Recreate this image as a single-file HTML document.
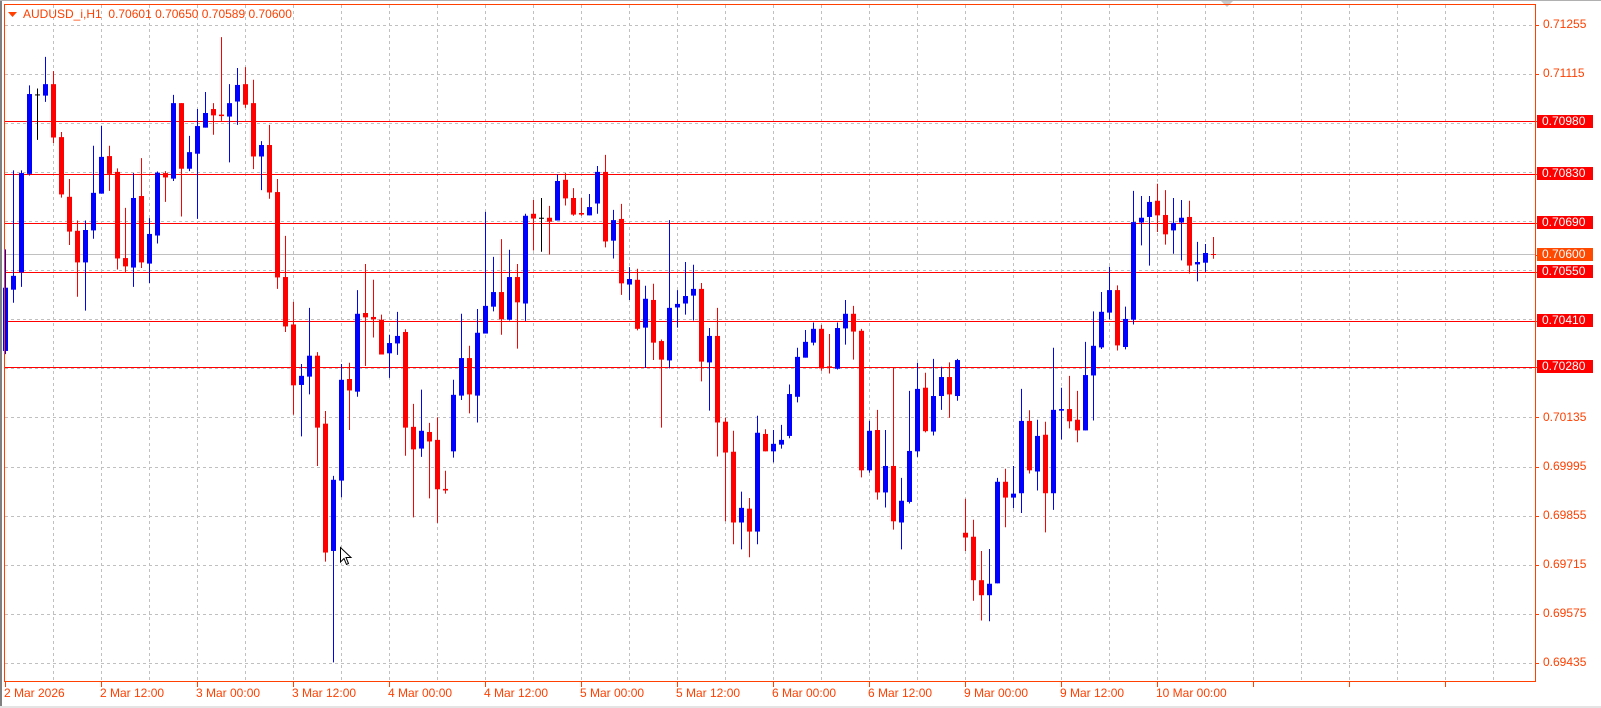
<!DOCTYPE html>
<html><head><meta charset="utf-8">
<style>
html,body{margin:0;padding:0;background:#fff;width:1601px;height:708px;overflow:hidden;font-family:"Liberation Sans",sans-serif;}
#wrap{position:relative;width:1601px;height:708px;}
svg{position:absolute;left:0;top:0;}
.t{position:absolute;font-size:12px;color:#ff4000;white-space:nowrap;line-height:13px;}
.bx{position:absolute;left:1537px;width:56px;height:13px;font-size:12px;line-height:13px;color:#fff;padding-left:5px;box-sizing:border-box;}
</style></head><body><div id="wrap">
<svg id="s" width="1601" height="708" xmlns="http://www.w3.org/2000/svg"></svg>
<div class="t" style="left:23px;top:8px;">AUDUSD_i,H1&nbsp; 0.70601 0.70650 0.70589 0.70600</div>
<div class="t" style="left:1543px;top:18px;">0.71255</div>
<div class="t" style="left:1543px;top:67px;">0.71115</div>
<div class="bx" style="top:115px;background:#ff0000;">0.70980</div>
<div class="bx" style="top:167px;background:#ff0000;">0.70830</div>
<div class="bx" style="top:216px;background:#ff0000;">0.70690</div>
<div class="bx" style="top:248px;background:#ff4800;">0.70600</div>
<div class="bx" style="top:265px;background:#ff0000;">0.70550</div>
<div class="bx" style="top:314px;background:#ff0000;">0.70410</div>
<div class="bx" style="top:360px;background:#ff0000;">0.70280</div>
<div class="t" style="left:1543px;top:411px;">0.70135</div>
<div class="t" style="left:1543px;top:460px;">0.69995</div>
<div class="t" style="left:1543px;top:509px;">0.69855</div>
<div class="t" style="left:1543px;top:558px;">0.69715</div>
<div class="t" style="left:1543px;top:607px;">0.69575</div>
<div class="t" style="left:1543px;top:656px;">0.69435</div>
<div class="t" style="left:4px;top:687px;">2 Mar 2026</div>
<div class="t" style="left:100px;top:687px;">2 Mar 12:00</div>
<div class="t" style="left:196px;top:687px;">3 Mar 00:00</div>
<div class="t" style="left:292px;top:687px;">3 Mar 12:00</div>
<div class="t" style="left:388px;top:687px;">4 Mar 00:00</div>
<div class="t" style="left:484px;top:687px;">4 Mar 12:00</div>
<div class="t" style="left:580px;top:687px;">5 Mar 00:00</div>
<div class="t" style="left:676px;top:687px;">5 Mar 12:00</div>
<div class="t" style="left:772px;top:687px;">6 Mar 00:00</div>
<div class="t" style="left:868px;top:687px;">6 Mar 12:00</div>
<div class="t" style="left:964px;top:687px;">9 Mar 00:00</div>
<div class="t" style="left:1060px;top:687px;">9 Mar 12:00</div>
<div class="t" style="left:1156px;top:687px;">10 Mar 00:00</div>
</div>
<script>
var s=document.getElementById('s'),NS='http://www.w3.org/2000/svg',h='';
function ln(x1,y1,x2,y2,c,w,d){h+='<line x1="'+x1+'" y1="'+y1+'" x2="'+x2+'" y2="'+y2+'" stroke="'+c+'" stroke-width="'+(w||1)+'"'+(d?' stroke-dasharray="'+d+'"':'')+'/>';}
function rc(x,y,w,hh,c){h+='<rect x="'+x+'" y="'+y+'" width="'+w+'" height="'+hh+'" fill="'+c+'"/>';}
// outer
rc(0,0,2,708,'#808080');rc(0,0,1601,1,'#b0b0b0');rc(0,706,1601,2,'#e4e4e4');
h+='<polygon points="1221,1 1233,1 1227,7" fill="#c8c8c8"/>';
// grid
for(var k=0;k<14;k++){var y=Math.round(24.9+49.07*k)+0.5;ln(5,y,1535,y,'#c0c0c0',1,'3,3');}
for(var x=53.5;x<1535;x+=48){ln(x,5,x,681,'#c0c0c0',1,'3,3');}
// axis ticks
[24.9,74,417.4,466.5,515.6,564.7,613.7,662.8,121.3,173.9,223,254.5,272,321,366.6].forEach(function(y){y=Math.round(y)+0.5;ln(1535,y,1539,y,'#ff4000');});
for(var x=5.5;x<1535;x+=96){ln(x,682,x,687,'#ff4000');}
// level lines
[121.3,173.9,223,272,321,366.6].forEach(function(y){y=Math.round(y)+0.5;ln(5,y,1535,y,'#ff0000',1);});
ln(5,254.5,1535,254.5,'#c0c0c0',1);
var C={b:'#0000ff',r:'#ff0000',k:'#000000'};
function cand(xc,c,hi,t,b,lo){var xi=Math.round(xc);ln(xi+0.5,hi,xi+0.5,lo,C[c]);if(c=='k'){ln(xi-2,t+0.5,xi+3,t+0.5,C[c]);}else{rc(xi-2,t,5,Math.max(1.5,b-t),C[c]);}}
var S=[[0,[[16,'b',555,652,812,820],[40,'b',355,622,657,690],[64,'b',355,362,613,650],[88,'b',140,162,364,368],[112,'k',148,163,166,278],[136,'b',68,137,166,182],[160,'r',104,137,272,286],[184,'r',258,271,416,424],[208,'r',377,422,510,544],[232,'r',482,508,588,675],[256,'b',482,506,588,710],[280,'b',293,412,507,528],[304,'b',243,321,414,414],[328,'r',293,319,364,407],[352,'r',350,359,578,606],[376,'r',450,577,598,612],[400,'b',362,425,601,650],[424,'r',324,420,588,602],[448,'b',476,516,591,640],[472,'b',358,361,520,540],[496,'r',357,362,373,435],[520,'b',164,185,376,382],[544,'r',185,185,351,472],[568,'b',268,309,351,357],[592,'b',200,243,313,478],[616,'b',157,210,247,247],[640,'r',185,200,216,265],[664,'r',18,214,216,230],[688,'b',137,185,219,335],[712,'b',96,139,181,240],[736,'r',94,137,189,197],[760,'r',126,185,320,352],[784,'b',281,291,320,405],[808,'r',240,291,411,427],[832,'r',377,410,626,655],[856,'r',521,625,750,764],[880,'r',688,745,899,973]]],
[300,[[4,'b',845,875,898,1028],[28,'b',703,824,877,922],[52,'r',815,824,1006,1103],[76,'r',964,996,1322,1345],[100,'b',1128,1138,1318,1600],[124,'b',845,885,1140,1182],[148,'r',842,883,912,1012],[172,'b',658,718,915,928],[196,'r',592,716,727,850],[220,'r',632,726,732,778],[244,'r',720,733,821,821],[268,'b',771,792,818,880],[292,'b',713,774,793,822],[316,'r',757,764,1006,1077],[340,'r',946,1004,1061,1233],[364,'b',910,1014,1059,1080],[388,'r',994,1017,1041,1185],[412,'r',980,1037,1162,1247],[436,'r',1115,1161,1165,1173],[460,'b',885,923,1066,1082],[484,'b',718,830,925,936],[508,'r',799,830,922,970],[532,'b',706,766,925,993],[556,'b',460,698,768,768],[580,'b',574,663,700,712],[604,'r',529,663,732,771],[628,'b',556,625,733,735],[652,'r',592,625,689,806],[676,'b',465,470,692,736],[700,'r',430,465,477,558],[724,'k',425,475,478,561],[748,'r',445,475,485,568],[772,'b',365,382,482,482],[796,'r',362,379,426,444],[820,'r',400,425,467,470],[844,'r',425,463,467,470],[868,'b',415,448,469,469],[892,'b',344,359,439,465]]],
[600,[[16,'r',316,359,535,550],[40,'b',455,481,533,578],[64,'r',440,478,641,670],[88,'b',600,630,644,683],[112,'r',604,632,756,760],[136,'b',647,680,753,855],[160,'r',642,683,791,835],[184,'r',783,787,834,1006],[208,'b',481,703,836,856],[232,'b',658,693,702,753],[256,'b',587,673,692,720],[280,'b',594,655,672,735],[304,'r',640,655,839,889],[328,'b',754,774,841,963],[352,'r',703,774,993,1079],[376,'r',981,991,1069,1243],[400,'r',1014,1067,1246,1301],[424,'b',1168,1209,1246,1314],[448,'r',1184,1211,1269,1334],[472,'b',976,1019,1269,1301],[496,'r',1010,1022,1066,1066],[520,'b',1012,1047,1066,1094],[544,'b',999,1037,1049,1059],[568,'b',897,921,1027,1033],[592,'b',804,827,928,942],[616,'b',759,789,829,829],[640,'b',740,756,791,798],[664,'r',746,756,856,862],[688,'r',769,851,854,869],[712,'b',740,754,857,859],[736,'b',683,718,755,796],[760,'r',698,718,763,834],[784,'r',756,761,1114,1132],[808,'b',989,1014,1114,1120],[832,'r',961,1012,1170,1188],[856,'b',1012,1103,1170,1208],[880,'r',855,1103,1243,1264]]],
[900,[[4,'b',1133,1191,1246,1314],[28,'b',913,1065,1194,1198],[52,'b',842,908,1066,1080],[76,'r',867,905,1015,1018],[100,'b',832,926,1016,1026],[124,'b',852,878,926,961],[148,'r',841,878,922,981],[172,'b',832,835,926,938],[196,'r',1186,1272,1284,1318],[220,'r',1239,1282,1392,1444],[244,'r',1318,1392,1430,1494],[268,'b',1313,1401,1430,1496],[292,'b',1133,1143,1400,1400],[316,'r',1110,1143,1183,1258],[340,'b',1103,1173,1183,1210],[364,'b',908,989,1172,1222],[388,'r',962,989,1114,1122],[412,'b',986,1027,1117,1165],[436,'r',991,1024,1172,1271],[460,'b',804,961,1172,1214],[484,'b',905,959,963,1036],[508,'r',875,959,990,1008],[532,'r',913,986,1013,1043],[556,'b',789,873,1013,1013],[580,'b',712,799,874,988],[604,'b',663,713,803,807],[628,'b',599,658,715,732],[652,'r',646,658,798,811],[676,'b',700,731,802,808],[700,'b',407,486,733,745],[724,'b',420,475,487,545],[748,'b',420,435,473,596],[772,'r',389,432,469,511],[796,'r',405,468,517,543],[820,'b',425,488,507,566],[844,'b',430,475,487,583],[868,'r',432,473,596,616],[892,'b',536,587,593,636]]]];
S.forEach(function(g){g[1].forEach(function(d){var f=function(v){return 30+v/2.53;};cand(g[0]+d[0]/3,d[1],f(d[2]),f(d[3]),f(d[4]),f(d[5]));});});
cand(1205.3,'b',244,253,262.7,271.7);
ln(1213.5,237,1213.5,258.7,'#ff0000');ln(1211,254.5,1216,254.5,'#ff0000');
// frame
h+='<rect x="4.5" y="4.5" width="1531" height="677" fill="none" stroke="#ff4000" stroke-width="1"/>';
// header triangle
h+='<polygon points="8,12 17,12 12.5,17" fill="#ff4000"/>';
// cursor
h+='<polygon points="340.5,547.5 340.5,562 344,558.5 346.5,564.5 348.5,563.5 346,557.5 351,557.5" fill="#fff" stroke="#000" stroke-width="1"/>';
s.innerHTML=h;
</script>
</body></html>
